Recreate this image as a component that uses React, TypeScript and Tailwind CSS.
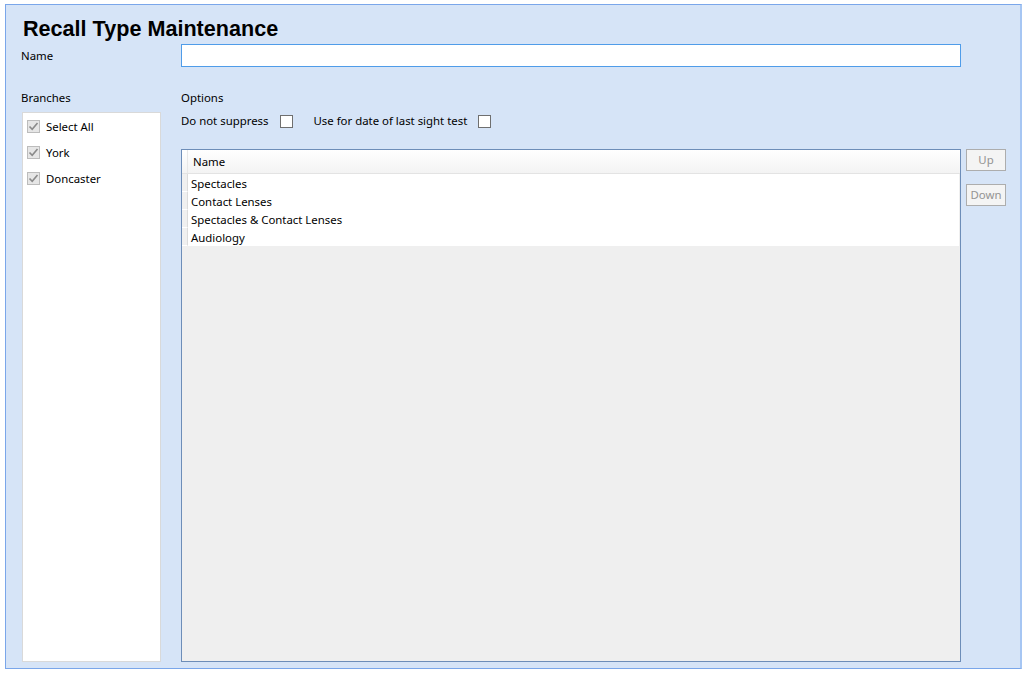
import React from "react";

const ui = { fontFamily: '"Noto Sans", "Open Sans", sans-serif' };

function CheckedBox() {
  return (
    <div className="w-[13px] h-[13px] border border-[#bcbcbc] bg-[#e6e6e6] flex items-center justify-center shrink-0">
      <svg width="11" height="11" viewBox="0 0 11 11">
        <path d="M1.5 5.5 L4.2 8.3 L9.5 2" fill="none" stroke="#8a8a8a" strokeWidth="1.6" />
      </svg>
    </div>
  );
}

function EmptyBox() {
  return <div className="w-[13px] h-[13px] border border-[#6f6f6f] bg-white shrink-0" />;
}

export default function App() {
  const branches = ["Select All", "York", "Doncaster"];
  const rows = ["Spectacles", "Contact Lenses", "Spectacles & Contact Lenses", "Audiology"];
  return (
    <div className="w-[1026px] h-[675px] bg-white pt-[4px] pl-[5px] text-[11.4px] text-black" style={ui}>
      <div className="w-[1017px] h-[665px] border border-[#7aa6ea] border-r-2 border-r-[#a6c6f3] bg-[#d6e4f7] flex flex-col">
        <div
          className="mt-[12px] pl-[17px] h-[24px] text-[21.6px] leading-[24px] font-bold"
          style={{ fontFamily: '"Liberation Sans", Arial, sans-serif' }}
        >
          Recall Type Maintenance
        </div>
        <div className="mt-[3px] flex items-center h-[23px]">
          <div className="pl-[15px] w-[175px] leading-[16px]">Name</div>
          <div className="w-[780px] h-[23px] border border-[#4f9ce9] bg-white" />
        </div>
        <div className="mt-[23px] flex h-[16px] leading-[16px]">
          <div className="pl-[15px] w-[175px]">Branches</div>
          <div>Options</div>
        </div>
        <div className="mt-[6px] flex flex-1 pb-[6px]">
          <div className="ml-[16px] w-[139px] border border-[#d9d9d9] bg-white pt-[7px] pl-[4px] flex flex-col gap-[13px]">
            {branches.map((b) => (
              <div key={b} className="flex items-center gap-[6px] h-[13px] leading-[13px]">
                <CheckedBox />
                <span>{b}</span>
              </div>
            ))}
          </div>
          <div className="ml-[20px] flex flex-col flex-1">
            <div className="h-[18px] flex items-center">
              <span>Do not suppress</span>
              <div className="ml-[11px]"><EmptyBox /></div>
              <span className="ml-[21px]">Use for date of last sight test</span>
              <div className="ml-[11px]"><EmptyBox /></div>
            </div>
            <div className="mt-[19px] flex flex-1">
              <div className="w-[780px] border border-[#6d8db8] bg-[#efefef] flex flex-col">
                <div className="h-[24px] flex border-b border-[#e3e3e3] bg-gradient-to-b from-white to-[#f3f3f3]">
                  <div className="w-[6px] border-r border-[#e8e8e8]" />
                  <div className="pl-[5px] flex items-center leading-[16px]">Name</div>
                </div>
                {rows.map((r) => (
                  <div key={r} className="h-[18px] flex">
                    <div className="w-[6px] bg-[#f0f0f0] border-r border-[#dcdcdc] border-b border-b-white" />
                    <div className="flex-1 bg-white pl-[3px] pt-[1px] leading-[17px] mr-[1px]">{r}</div>
                  </div>
                ))}
              </div>
              <div className="ml-[5px] flex flex-col">
                <div className="w-[40px] h-[22px] border border-[#adadad] bg-[#f4f4f4] text-[#939393] flex items-center justify-center leading-[16px]">
                  Up
                </div>
                <div className="mt-[13px] w-[40px] h-[22px] border border-[#adadad] bg-[#f4f4f4] text-[#939393] flex items-center justify-center leading-[16px]">
                  Down
                </div>
              </div>
            </div>
          </div>
        </div>
      </div>
    </div>
  );
}
